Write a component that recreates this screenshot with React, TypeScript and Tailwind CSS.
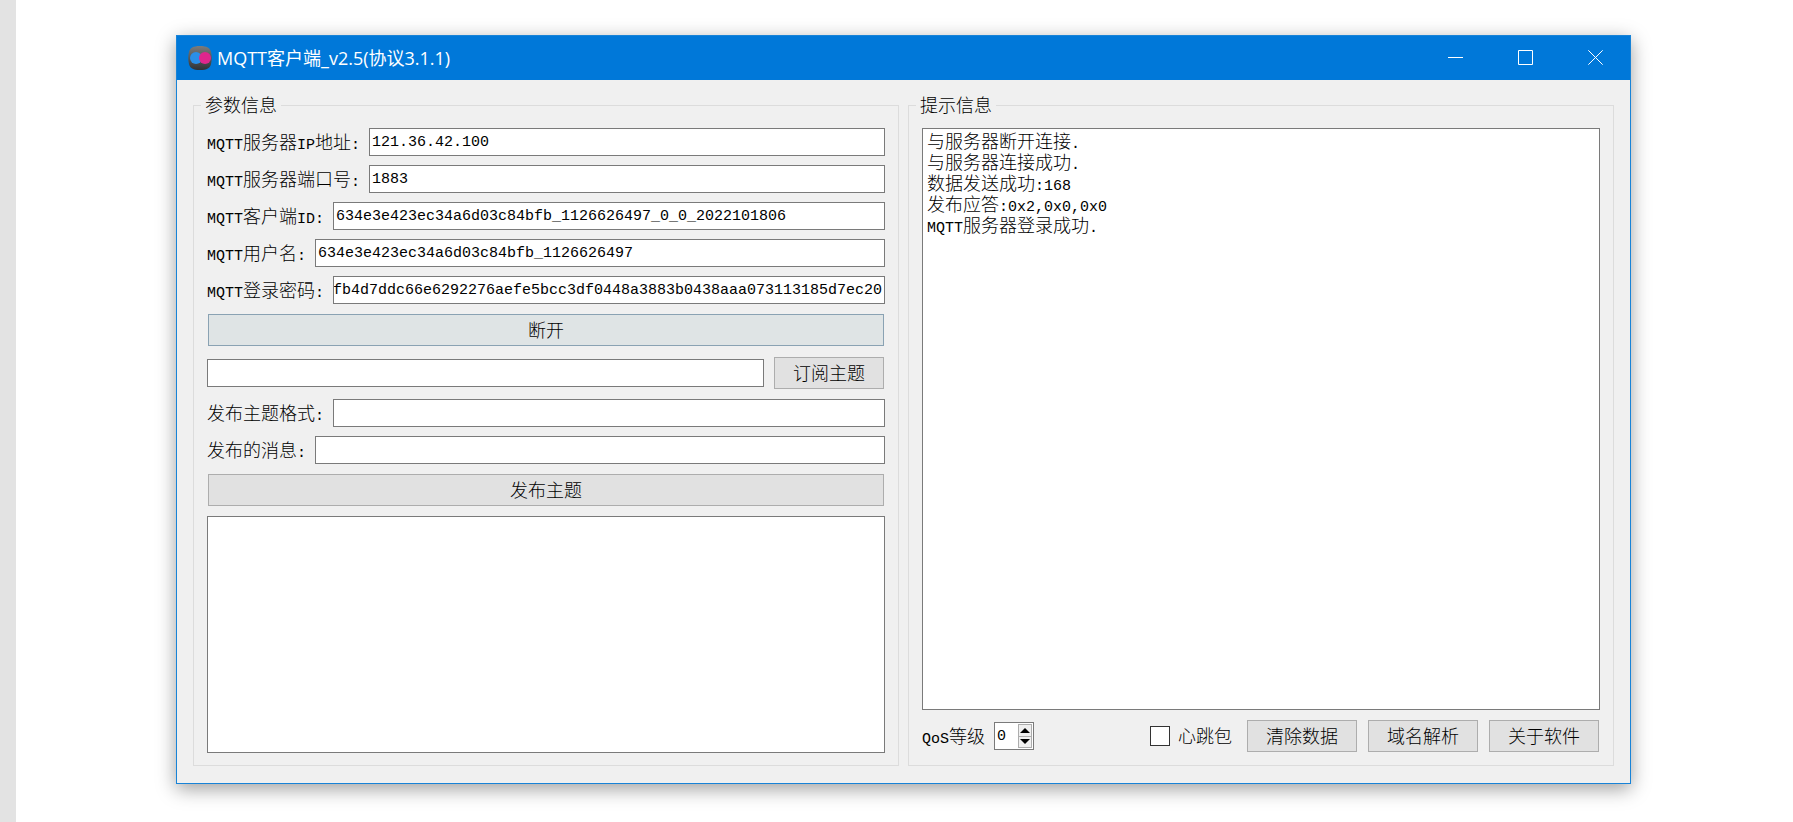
import { useState } from "react";

const FIELD = "h-7 min-w-0 flex-1 border border-[#7a7a7a] bg-white pt-px font-['Liberation_Mono',monospace] text-[15px] text-black outline-none";
const BUTTON = "m-px h-8 border border-[#adadad] bg-[#e1e1e1] text-center hover:border-[#0078d7] hover:bg-[#e5f1fb]";

const LOG_LINES = [
    "与服务器断开连接.",
    "与服务器连接成功.",
    "数据发送成功:168",
    "发布应答:0x2,0x0,0x0",
    "MQTT服务器登录成功.",
];

// Latin runs are half as wide as the Chinese characters beside them
function Text({ children }: { children: string }) {
    const parts = children.split(/([\x20-\x7e]+)/).filter(Boolean);
    return (
        <>
            {parts.map((part, i) =>
                /^[\x20-\x7e]/.test(part) ? (
                    <span key={i} className="font-['Liberation_Mono',monospace] text-[15px] leading-[0]">{part}</span>
                ) : (
                    part
                )
            )}
        </>
    );
}

interface FieldRowProps {
    id: string;
    label: string;
    initial?: string;
    showEnd?: boolean;
}

function FieldRow({ id, label, initial = "", showEnd = false }: FieldRowProps) {
    const [value, setValue] = useState(initial);

    function scrollToEnd(el: HTMLInputElement | null) {
        if (el && showEnd) el.scrollLeft = el.scrollWidth;
    }

    return (
        <div className="flex items-center gap-[9px]">
            <label htmlFor={id} className="shrink-0 whitespace-nowrap">
                <Text>{label}</Text>
            </label>
            <input
                id={id}
                ref={scrollToEnd}
                value={value}
                onChange={(e) => setValue(e.target.value)}
                className={showEnd ? `${FIELD} pr-0.5` : `${FIELD} pl-0.5`}
            />
        </div>
    );
}

function AppIcon() {
    return (
        <svg viewBox="0 0 24 24" className="size-6" aria-hidden="true">
            <defs>
                <linearGradient id="tile" x1="0" y1="0" x2="0" y2="1">
                    <stop offset="0" stopColor="#7b7b7b" />
                    <stop offset="0.5" stopColor="#55585a" />
                    <stop offset="1" stopColor="#2e3135" />
                </linearGradient>
            </defs>
            <path d="M12 0C19 0 22 2 23 6c1 4 1 8 0 12-1 4-4 6-11 6S2 22 1 18C0 14 0 10 1 6 2 2 5 0 12 0Z" fill="url(#tile)" />
            <circle cx="8" cy="12" r="6" fill="#2a8fe8" />
            <circle cx="17" cy="12" r="6" fill="#e0268c" />
        </svg>
    );
}

function TitleBar() {
    return (
        <header className="flex h-11 items-center bg-[#0078d9] pb-px pl-[11px] text-white">
            <AppIcon />
            <h1 className="ml-[5px] flex-1 truncate font-['Open_Sans','Noto_Sans_CJK_SC',sans-serif] text-lg leading-6 font-normal">
                MQTT客户端_v2.5(协议3.1.1)
            </h1>
            <button aria-label="最小化" className="flex h-full w-[70px] items-center justify-center hover:bg-white/10">
                <svg viewBox="0 0 15 15" className="size-[15px]" stroke="currentColor" fill="none">
                    <path d="M0 7.5h15" />
                </svg>
            </button>
            <button aria-label="最大化" className="flex h-full w-[70px] items-center justify-center hover:bg-white/10">
                <svg viewBox="0 0 15 15" className="size-[15px]" stroke="currentColor" fill="none">
                    <path d="M.5.5h14v14H.5z" />
                </svg>
            </button>
            <button aria-label="关闭" className="flex h-full w-[70px] items-center justify-center hover:bg-[#e81123]">
                <svg viewBox="0 0 15 15" className="size-[15px]" stroke="currentColor" fill="none">
                    <path d="M.3.3l14.4 14.4M14.7.3.3 14.7" />
                </svg>
            </button>
        </header>
    );
}

function QosSpinner() {
    const [qos, setQos] = useState(0);
    const step = "flex flex-1 items-center justify-center border border-[#adadad] bg-[#f0f0f0]";

    return (
        <div className="flex items-center gap-[9px]">
            <label htmlFor="qos">
                <Text>QoS等级</Text>
            </label>
            <div className="flex h-7 w-10 border border-[#7a7a7a] bg-white">
                <input
                    id="qos"
                    type="number"
                    min={0}
                    max={2}
                    value={qos}
                    onChange={(e) => setQos(Number(e.target.value))}
                    className="min-w-0 flex-1 pt-px pl-0.5 font-['Liberation_Mono',monospace] text-[15px] outline-none [appearance:textfield] [&::-webkit-inner-spin-button]:appearance-none"
                />
                <div className="my-px mr-px flex w-3.5 flex-col">
                    <button aria-label="增加" onClick={() => setQos(Math.min(2, qos + 1))} className={step}>
                        <svg viewBox="0 0 10 5" className="h-[5px] w-2.5 shrink-0">
                            <path d="M0 5 5 0l5 5Z" />
                        </svg>
                    </button>
                    <button aria-label="减少" onClick={() => setQos(Math.max(0, qos - 1))} className={`${step} border-t-0`}>
                        <svg viewBox="0 0 10 5" className="h-[5px] w-2.5 shrink-0">
                            <path d="M0 0l5 5 5-5Z" />
                        </svg>
                    </button>
                </div>
            </div>
        </div>
    );
}

export default function App() {
    const [topic, setTopic] = useState("");
    const [received, setReceived] = useState("");
    const [lines, setLines] = useState(LOG_LINES);
    const [heartbeat, setHeartbeat] = useState(false);

    return (
        <div className="flex min-h-screen bg-white font-['Lato','Noto_Sans_CJK_SC',sans-serif] text-lg leading-[21px] font-light text-black">
            <div className="w-4 shrink-0 bg-[#e3e3e3]" />
            <main className="min-w-0 flex-1 pt-[35px] pr-[162px] pl-40">
                <div className="border border-[#1883d7] bg-[#f0f0f0] shadow-[0_5px_18px_rgba(0,0,0,0.38)]">
                    <TitleBar />
                    <div className="grid grid-cols-2 gap-[9px] px-4 pt-4 pb-[17px]">
                        <fieldset className="flex min-w-0 flex-col gap-[9px] border border-[#dcdcdc] px-[13px] pt-3.5 pb-3">
                            <legend className="-ml-1.5 px-1 leading-[18px]">参数信息</legend>
                            <FieldRow id="host" label="MQTT服务器IP地址:" initial="121.36.42.100" />
                            <FieldRow id="port" label="MQTT服务器端口号:" initial="1883" />
                            <FieldRow id="client" label="MQTT客户端ID:" initial="634e3e423ec34a6d03c84bfb_1126626497_0_0_2022101806" />
                            <FieldRow id="user" label="MQTT用户名:" initial="634e3e423ec34a6d03c84bfb_1126626497" />
                            <FieldRow
                                id="password"
                                label="MQTT登录密码:"
                                initial="fb4d7ddc66e6292276aefe5bcc3df0448a3883b0438aaa073113185d7ec20"
                                showEnd
                            />
                            <button className="m-px h-8 border border-[#8aa2b3] bg-[#dfe4e5] text-center">断开</button>
                            <div className="flex items-center gap-[9px]">
                                <input
                                    aria-label="订阅主题"
                                    value={topic}
                                    onChange={(e) => setTopic(e.target.value)}
                                    className={`${FIELD} pl-0.5`}
                                />
                                <button className={`${BUTTON} w-[110px]`}>订阅主题</button>
                            </div>
                            <FieldRow id="pub-topic" label="发布主题格式:" />
                            <FieldRow id="pub-message" label="发布的消息:" />
                            <button className={BUTTON}>发布主题</button>
                            <textarea
                                aria-label="接收的消息"
                                value={received}
                                onChange={(e) => setReceived(e.target.value)}
                                className="h-[237px] resize-none border border-[#7a7a7a] bg-white px-1 py-0.5 outline-none"
                            />
                        </fieldset>

                        <fieldset className="flex min-w-0 flex-col gap-[9px] border border-[#dcdcdc] px-[13px] pt-3.5 pb-3">
                            <legend className="-ml-1.5 px-1 leading-[18px]">提示信息</legend>
                            <div role="log" className="flex-1 border border-[#7a7a7a] bg-white px-1 py-0.5">
                                {lines.map((line) => (
                                    <p key={line}>
                                        <Text>{line}</Text>
                                    </p>
                                ))}
                            </div>
                            <div className="flex items-center gap-[9px]">
                                <QosSpinner />
                                <label className="mr-[5px] ml-auto flex items-center gap-2">
                                    <input
                                        type="checkbox"
                                        checked={heartbeat}
                                        onChange={(e) => setHeartbeat(e.target.checked)}
                                        className="size-5 appearance-none border border-[#333333] bg-white checked:bg-[#0078d7]"
                                    />
                                    心跳包
                                </label>
                                <button onClick={() => setLines([])} className={`${BUTTON} w-[110px]`}>清除数据</button>
                                <button className={`${BUTTON} w-[110px]`}>域名解析</button>
                                <button className={`${BUTTON} w-[110px]`}>关于软件</button>
                            </div>
                        </fieldset>
                    </div>
                </div>
            </main>
        </div>
    );
}
